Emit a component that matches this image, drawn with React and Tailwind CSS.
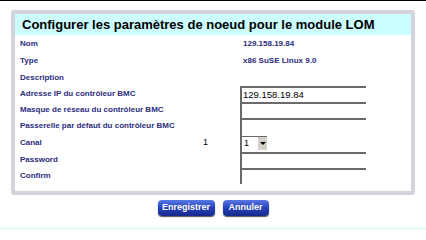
import React from "react";

const rows = [
  { label: "Nom", value: "129.158.19.84", h: "h-[17px]" },
  { label: "Type", value: "x86 SuSE Linux 9.0", h: "h-[17px]" },
  { label: "Description", h: "h-[17px]" },
  { label: "Adresse IP du contrôleur BMC", input: "129.158.19.84", h: "h-[16px]" },
  { label: "Masque de réseau du contrôleur BMC", input: "", h: "h-[16px]" },
  { label: "Passerelle par défaut du contrôleur BMC", input: "", h: "h-[16px]" },
  { label: "Canal", middle: "1", select: true, h: "h-[18px]" },
  { label: "Password", input: "", h: "h-[16px]" },
  { label: "Confirm", input: "", h: "h-[16px]" },
];

function Field({ row }) {
  if (row.select) {
    return (
      <div className="h-full w-[126px] border-l-2 border-[#6a6a6a] flex items-center">
        <div className="flex h-[14px] w-[25px] border-t border-[#6a6a6a] bg-white">
          <span className="flex-1 pl-[2px] text-[9px] leading-[13px] text-black">1</span>
          <span className="flex w-[9px] items-center justify-center bg-[#d4d0c8]">
            <span className="block h-0 w-0 border-x-[3px] border-t-[3px] border-x-transparent border-t-black" />
          </span>
        </div>
      </div>
    );
  }
  if (row.input !== undefined) {
    return (
      <div className="h-full w-[126px] border-t-2 border-l-2 border-[#6a6a6a] bg-white pl-[1px] text-[9.5px] leading-[13px] text-black">
        {row.input}
      </div>
    );
  }
  return (
    <div className="pl-[3px] text-[8px] font-bold text-[#2c2c7c]">{row.value}</div>
  );
}

export default function App() {
  return (
    <div className="relative h-[230px] w-[426px] overflow-hidden bg-white font-['Liberation_Sans',Arial,sans-serif]">
      <div className="h-[1px] bg-black" />

      {/* panel */}
      <div className="ml-[11px] mt-[9px] w-[404px] rounded-[3px] border-[4px] border-[#d3d4dc] bg-white">
        <div className="flex h-[21px] items-center bg-[#ccfdff] px-[7px]">
          <h1 className="whitespace-nowrap text-[13px] font-bold text-black">
            Configurer les paramètres de noeud pour le module LOM
          </h1>
        </div>

        <div className="pb-[7px] pl-[5px]">
          {rows.map((row) => (
            <div key={row.label} className={`flex items-center ${row.h}`}>
              <div className="w-[183px] whitespace-nowrap text-[8px] font-bold text-[#2c2c7c]">
                {row.label}
              </div>
              <div className="w-[37px] text-[9px] text-black">{row.middle}</div>
              <Field row={row} />
            </div>
          ))}
        </div>
      </div>

      {/* buttons */}
      <div className="mt-[5px] flex justify-center gap-[8px]">
        <button className="h-[16px] w-[57px] rounded-[4px] bg-gradient-to-b from-[#5a78e6] via-[#2540b8] to-[#172a8c] text-[9px] font-bold text-white shadow-[0_1px_1px_#555]">
          Enregistrer
        </button>
        <button className="h-[16px] w-[46px] rounded-[4px] bg-gradient-to-b from-[#5a78e6] via-[#2540b8] to-[#172a8c] text-[9px] font-bold text-white shadow-[0_1px_1px_#555]">
          Annuler
        </button>
      </div>

      <div className="absolute bottom-[1px] left-0 h-[1px] w-full bg-[#c8fbf8]" />
    </div>
  );
}
